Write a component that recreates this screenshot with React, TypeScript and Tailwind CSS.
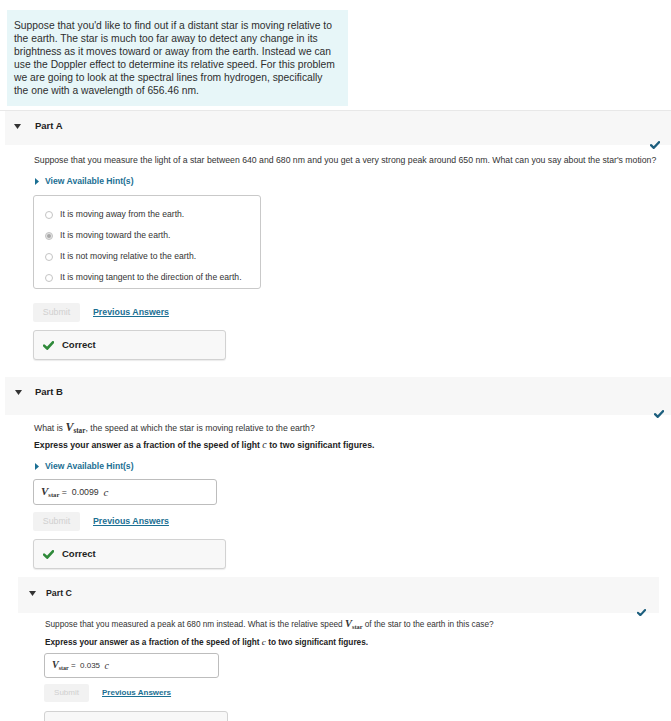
import React from 'react';

const SANS = "font-['Liberation_Sans',Arial,sans-serif]";

function DownArrow() {
  return (
    <svg width="7" height="5" viewBox="0 0 7 5" className="shrink-0">
      <path d="M0 0 L7 0 L3.5 5 Z" fill="#333" />
    </svg>
  );
}

function RightArrow() {
  return (
    <svg width="4" height="7" viewBox="0 0 4 7" className="shrink-0">
      <path d="M0 0 L4 3.5 L0 7 Z" fill="#1b6f93" />
    </svg>
  );
}

function Check({ color, size = 10 }: { color: string; size?: number }) {
  return (
    <svg width={size} height={size * 0.8} viewBox="0 0 10 8">
      <path d="M1 4.2 L3.8 6.8 L9 1.2" fill="none" stroke={color} strokeWidth="2.4" strokeLinecap="round" strokeLinejoin="round" />
    </svg>
  );
}

function VStar({ big = 12 }: { big?: number }) {
  return (
    <span className="font-['Liberation_Serif',serif] leading-none">
      <span className="italic font-bold leading-none" style={{ fontSize: big }}>V</span>
      <span className="font-bold leading-none align-[-2px]" style={{ fontSize: big * 0.6 }}>star</span>
    </span>
  );
}

function Radio({ selected }: { selected?: boolean }) {
  return (
    <span className={`w-[8px] h-[8px] rounded-full border border-[#c4c4c4] flex items-center justify-center shrink-0 ${selected ? 'bg-[#e4e4e4]' : 'bg-white'}`}>
      {selected && <span className="w-[4px] h-[4px] rounded-full bg-[#a8a8a8]" />}
    </span>
  );
}

function Hint() {
  return (
    <div className="flex items-center gap-[6px] h-[12px] text-[8.6px] font-bold text-[#1b6f93]">
      <RightArrow />
      <span>View Available Hint(s)</span>
    </div>
  );
}

function SubmitRow({ h, w, textSize }: { h: string; w: string; textSize: string }) {
  return (
    <div className="flex items-center gap-[13px]">
      <div className={`${h} ${w} bg-[#f2f2f2] rounded-[2px] text-[#d0d0d0] flex items-center justify-center ${textSize}`}>Submit</div>
      <span className={`${textSize} font-bold text-[#1b6f93] underline`}>Previous Answers</span>
    </div>
  );
}

function CorrectBox() {
  return (
    <div className="w-[193px] h-[30px] bg-[#f8f8f8] border border-[#d2d2d2] rounded-[3px] shadow-[0_1px_1px_rgba(0,0,0,0.08)] flex items-center pl-[9px] gap-[8px]">
      <Check color="#2f8a3a" size={11} />
      <span className="text-[9.5px] font-bold text-[#222]">Correct</span>
    </div>
  );
}

const options = [
  'It is moving away from the earth.',
  'It is moving toward the earth.',
  'It is not moving relative to the earth.',
  'It is moving tangent to the direction of the earth.',
];

export default function App() {
  return (
    <div className={`w-[671px] h-[721px] overflow-hidden bg-white text-[#333] ${SANS}`}>
      {/* intro */}
      <div className="pt-[10px] pl-[7px]">
        <div className="w-[341px] bg-[#e7f6f8] pl-[7px] pr-[12px] pt-[10px] pb-[9px] text-[10.3px] leading-[12.9px] text-[#2e2e2e]">
          Suppose that you'd like to find out if a distant star is moving relative to the earth. The star is much too far away to detect any change in its brightness as it moves toward or away from the earth. Instead we can use the Doppler effect to determine its relative speed. For this problem we are going to look at the spectral lines from hydrogen, specifically the one with a wavelength of 656.46 nm.
        </div>
      </div>

      {/* Part A */}
      <div className="mt-[4px] border-t border-[#e8e8e8]">
        <div className="relative ml-[5px] h-[34px] bg-[#f7f7f7] flex items-start pt-[9px] pl-[9px] gap-[14px]">
          <div className="h-[12px] flex items-center"><DownArrow /></div>
          <span className="text-[9.5px] leading-[12px] font-bold text-[#222]">Part A</span>
          <div className="absolute right-[11px] bottom-[-4px]"><Check color="#1d5f7e" /></div>
        </div>
        <div className="pl-[34px]">
          <p className="mt-[9px] h-[12px] text-[8.7px] leading-[12px]">
            Suppose that you measure the light of a star between 640 and 680 nm and you get a very strong peak around 650 nm. What can you say about the star's motion?
          </p>
          <div className="mt-[9px] pl-[1px]">
            <Hint />
          </div>
          <div className="mt-[8px] ml-[-1px] w-[228px] border border-[#c9c9c9] rounded-[3px] pt-[8px] pl-[11px]">
            {options.map((o, i) => (
              <div key={o} className="h-[21px] flex items-center gap-[7px] text-[8.6px]">
                <Radio selected={i === 1} />
                <span>{o}</span>
              </div>
            ))}
          </div>
          <div className="mt-[14px] ml-[-1px]">
            <SubmitRow h="h-[19px]" w="w-[47px]" textSize="text-[8.8px]" />
          </div>
          <div className="mt-[8px] ml-[-1px]">
            <CorrectBox />
          </div>
        </div>
      </div>

      {/* Part B */}
      <div className="mt-[17px]">
        <div className="relative ml-[5px] h-[38px] bg-[#f7f7f7] flex items-start pt-[9px] pl-[10px] gap-[13px]">
          <div className="h-[12px] flex items-center"><DownArrow /></div>
          <span className="text-[9.5px] leading-[12px] font-bold text-[#222]">Part B</span>
          <div className="absolute right-[7px] bottom-[-3px]"><Check color="#1d5f7e" /></div>
        </div>
        <div className="pl-[34px]">
          <p className="mt-[6px] h-[12px] text-[8.7px] leading-[12px] flex items-baseline whitespace-pre">
            What is <VStar big={12} />, the speed at which the star is moving relative to the earth?
          </p>
          <p className="mt-[6px] h-[12px] text-[8.7px] leading-[12px] font-bold text-[#222]">
            Express your answer as a fraction of the speed of light <span className="font-['Liberation_Serif',serif] italic font-normal text-[10px] leading-none">c</span> to two significant figures.
          </p>
          <div className="mt-[9px] pl-[1px]">
            <Hint />
          </div>
          <div className="mt-[7px] ml-[-1px] w-[184px] h-[26px] border border-[#bdbdbd] rounded-[3px] flex items-center pl-[7px] text-[8.8px] whitespace-pre">
            <VStar big={11} /> =  0.0099  <span className="font-['Liberation_Serif',serif] italic text-[11px] leading-none">c</span>
          </div>
          <div className="mt-[7px] ml-[-1px]">
            <SubmitRow h="h-[19px]" w="w-[47px]" textSize="text-[8.8px]" />
          </div>
          <div className="mt-[8px] ml-[-1px]">
            <CorrectBox />
          </div>
        </div>
      </div>

      {/* Part C */}
      <div className="mt-[8px] pl-[18px] w-[659px]">
        <div className="relative h-[36px] bg-[#f7f7f7] flex items-start pt-[10px] pl-[11px] gap-[10px]">
          <div className="h-[12px] flex items-center"><DownArrow /></div>
          <span className="text-[8.8px] leading-[12px] font-bold text-[#222]">Part C</span>
          <div className="absolute right-[13px] bottom-[-3px]"><Check color="#1d5f7e" size={9} /></div>
        </div>
        <div className="pl-[27px]">
          <p className="mt-[6px] h-[12px] text-[8.25px] leading-[12px] flex items-baseline whitespace-pre">
            Suppose that you measured a peak at 680 nm instead. What is the relative speed <VStar big={10.5} /> of the star to the earth in this case?
          </p>
          <p className="mt-[6px] h-[12px] text-[8.25px] leading-[12px] font-bold text-[#222]">
            Express your answer as a fraction of the speed of light <span className="font-['Liberation_Serif',serif] italic font-normal text-[9px] leading-none">c</span> to two significant figures.
          </p>
          <div className="mt-[4px] ml-[-1px] w-[175px] h-[25px] border border-[#bdbdbd] rounded-[3px] flex items-center pl-[7px] text-[8px] whitespace-pre">
            <VStar big={10} /> =  0.035  <span className="font-['Liberation_Serif',serif] italic text-[10px] leading-none">c</span>
          </div>
          <div className="mt-[6px] ml-[-1px]">
            <SubmitRow h="h-[18px]" w="w-[45px]" textSize="text-[8px]" />
          </div>
          <div className="mt-[9px] ml-[-1px]">
            <div className="w-[184px] h-[30px] bg-[#f8f8f8] border border-[#d2d2d2] rounded-[3px]" />
          </div>
        </div>
      </div>
    </div>
  );
}
